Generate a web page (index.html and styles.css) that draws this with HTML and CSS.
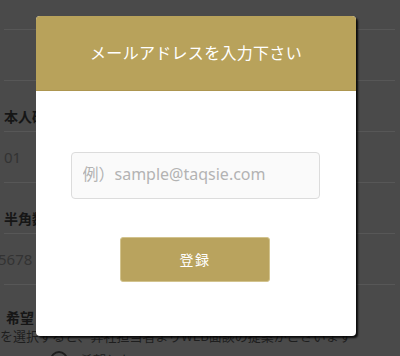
FILE: index.html
```html
<!DOCTYPE html>
<html lang="ja">
<head>
<meta charset="utf-8">
<link rel="stylesheet" href="styles.css">
</head>
<body>
<div class="page">
  <div class="row row-top"></div>
  <div class="row"></div>
  <div class="row label-row"><span class="label">本人確認書類</span></div>
  <div class="row value-row"><span class="value">01</span></div>
  <div class="row label-row"><span class="label">半角数字で入力</span></div>
  <div class="row value-row"><span class="value value-cut">5678</span></div>
  <div class="section">
    <div class="label label-wish">希望しますか</div>
    <div class="note">を選択すると、弊社担当者よりWEB面談の提案がございます</div>
    <div class="radio-row"><span class="radio"></span><span class="radio-text">希望しない</span></div>
  </div>
</div>

<div class="modal">
  <div class="modal-head">メールアドレスを入力下さい</div>
  <div class="modal-body">
    <input class="email" type="text" placeholder="例）sample@taqsie.com">
    <button class="submit" type="button">登録</button>
  </div>
</div>
</body>
</html>
```

FILE: styles.css
```css
* { box-sizing: border-box; }
html, body {
  margin: 0;
  width: 400px;
  height: 356px;
  overflow: hidden;
}
body {
  background: #4a4a4a;
  font-family: "Noto Sans", "Noto Sans CJK JP", sans-serif;
  position: relative;
}
.page {
  padding: 0 5px 0 4px;
}
.row {
  height: 51px;
  border-bottom: 1px solid #575757;
  display: flex;
}
.row-top { height: 30px; }
.label-row {
  align-items: flex-end;
  padding-bottom: 5px;
}
.value-row {
  align-items: center;
}
.label {
  font-family: "Noto Sans CJK JP", sans-serif;
  font-weight: 700;
  font-size: 14px;
  line-height: 20px;
  color: #161616;
}
.value {
  font-size: 15px;
  line-height: 20px;
  color: #333;
}
.value-cut { margin-left: -6px; }
.section {
  padding-top: 22px;
}
.label-wish {
  padding-left: 2px;
}
.note {
  font-family: "Noto Sans CJK JP", sans-serif;
  font-size: 13px;
  line-height: 18px;
  color: #1e1e1e;
  margin-left: -4px;
  white-space: nowrap;
}
.radio-row {
  display: flex;
  align-items: flex-start;
  gap: 12px;
  padding-left: 46px;
  margin-top: 6px;
}
.radio {
  width: 18px;
  height: 18px;
  border: 2px solid #1e1e1e;
  border-radius: 50%;
  flex: none;
}
.radio-text {
  font-family: "Noto Sans CJK JP", sans-serif;
  font-size: 13px;
  line-height: 18px;
  color: #1e1e1e;
}

.modal {
  position: absolute;
  left: 36px;
  top: 16px;
  width: 320px;
  height: 320px;
  background: #fff;
  border-radius: 4px;
  box-shadow: 2px 2px 2px rgba(0,0,0,0.85);
  overflow: hidden;
  display: flex;
  flex-direction: column;
}
.modal-head {
  height: 75px;
  background: #b8a25b;
  border-bottom: 1px solid #ad9650;
  color: #fff;
  font-family: "Noto Sans CJK JP", sans-serif;
  font-size: 16px;
  letter-spacing: 0.3px;
  display: flex;
  align-items: center;
  justify-content: center;
  padding-bottom: 2px;
}
.modal-body {
  display: flex;
  flex-direction: column;
  align-items: center;
  padding-top: 61px;
}
.email {
  width: 249px;
  height: 47px;
  margin-left: -2px;
  border: 1px solid #dcdcdc;
  border-radius: 4px;
  background: #fafafa;
  padding: 0 11px 3px;
  font-family: "Noto Sans", "Noto Sans CJK JP", sans-serif;
  font-size: 16px;
  color: #333;
  outline: none;
}
.email::placeholder {
  color: #b3b3b3;
}
.submit {
  margin-top: 38px;
  width: 150px;
  height: 45px;
  margin-left: -2px;
  background: #b9a35e;
  border: 1px solid #d2c38e;
  border-radius: 3px;
  color: #fff;
  font-family: "Noto Sans CJK JP", sans-serif;
  font-size: 14px;
  letter-spacing: 1.5px;
  padding: 0 0 2px;
}
```
